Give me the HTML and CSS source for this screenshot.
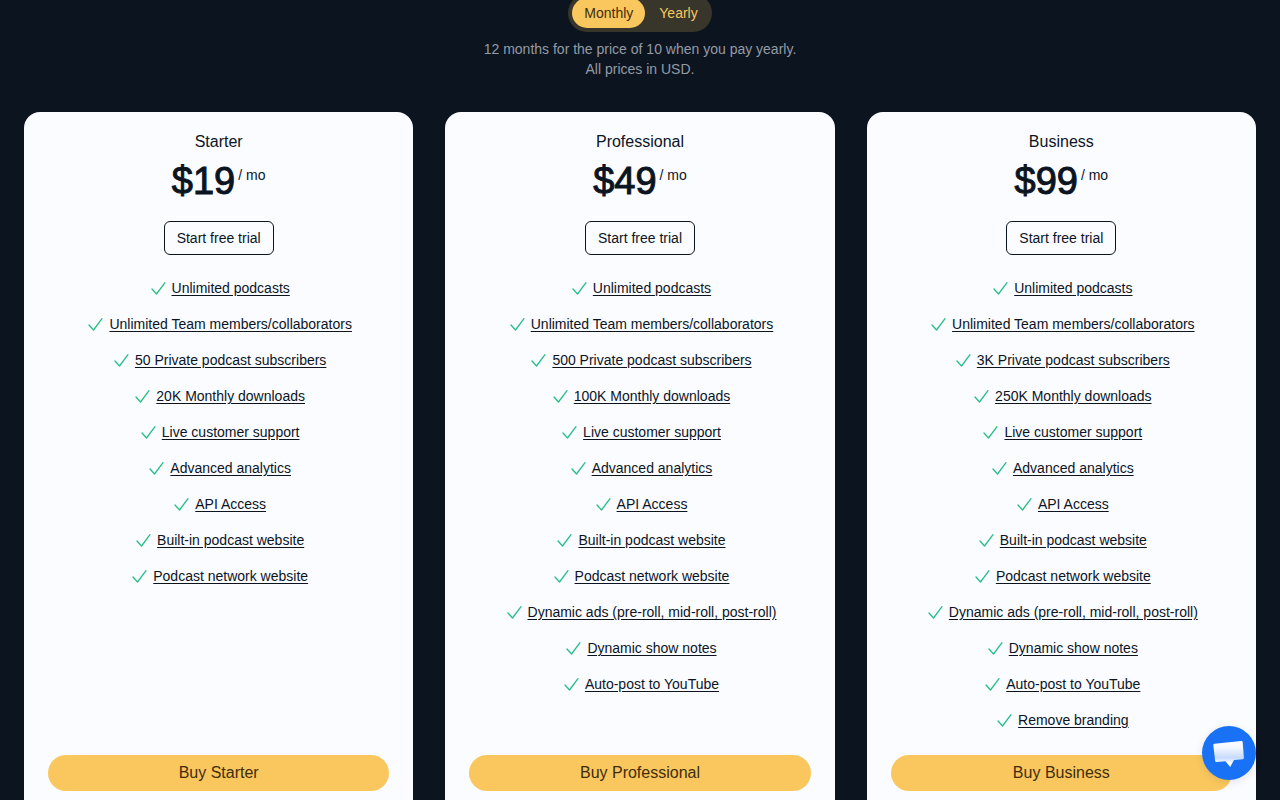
FILE: index.html
```
<!DOCTYPE html>
<html lang="en">
<head>
<meta charset="utf-8">
<meta name="viewport" content="width=device-width, initial-scale=1">
<title>Pricing</title>
<link rel="stylesheet" href="styles.css">
</head>
<body>
<main class="pricing">
  <header class="intro">
    <div class="toggle" role="group" aria-label="Billing period">
      <button type="button" class="toggle-btn active" aria-pressed="true">Monthly</button>
      <button type="button" class="toggle-btn" aria-pressed="false">Yearly</button>
    </div>
    <p class="note">12 months for the price of 10 when you pay yearly.<br>All prices in USD.</p>
  </header>
  <div class="plans" id="plans"></div>
</main>
<button type="button" class="chat" aria-label="Open chat">
  <svg viewBox="0 0 54 54" aria-hidden="true">
    <defs><linearGradient id="bubble" x1="0" y1="0" x2="0" y2="1"><stop offset="0" stop-color="#fff"/><stop offset="0.25" stop-color="#f4f8ff"/><stop offset="0.65" stop-color="#c6daff"/><stop offset="0.85" stop-color="#fff"/></linearGradient></defs>
    <path d="M12.500 17.700 39.200 15c.8-.1 1.400.4 1.500 1.200l1.200 15.500c0 .8-.5 1.400-1.300 1.500L32 34 28.200 41 23.500 35.200 14.600 36c-.8.1-1.400-.4-1.500-1.200L11.300 19.200c-.1-.8.4-1.400 1.200-1.500z" fill="url(#bubble)"/>
  </svg>
</button>
<script src="plans.js"></script>
</body>
</html>
```
FILE: plans.js
```
const shared = ["Live customer support", "Advanced analytics", "API Access", "Built-in podcast website", "Podcast network website"];
const extras = ["Dynamic ads (pre-roll, mid-roll, post-roll)", "Dynamic show notes", "Auto-post to YouTube"];
const plans = [
  { name: "Starter", price: 19, subs: "50", downloads: "20K", more: [] },
  { name: "Professional", price: 49, subs: "500", downloads: "100K", more: extras },
  { name: "Business", price: 99, subs: "3K", downloads: "250K", more: [...extras, "Remove branding"] }
];
const check = '<svg class="check" viewBox="0 0 20 20" aria-hidden="true"><path d="M4 11 8.500 16 17 4.700"/></svg>';

document.getElementById("plans").innerHTML = plans.map(p => {
  const features = ["Unlimited podcasts", "Unlimited Team members/collaborators",
    `${p.subs} Private podcast subscribers`, `${p.downloads} Monthly downloads`, ...shared, ...p.more];
  return `<section class="card">
    <h2 class="name">${p.name}</h2>
    <p class="price"><span class="amount">$${p.price}</span><span class="per">/ mo</span></p>
    <button type="button" class="trial">Start free trial</button>
    <ul class="features">${features.map(f => `<li class="feature">${check}<a href="#">${f}</a></li>`).join("")}</ul>
    <button type="button" class="buy">Buy ${p.name}</button>
  </section>`;
}).join("");
```
FILE: styles.css
```
* { box-sizing: border-box; }
body {
  margin: 0;
  height: 100vh;
  overflow: hidden;
  background: #0c141f;
  color: #0c141f;
  font: 14px/20px "Liberation Sans", Arial, sans-serif;
}
button { font: inherit; color: inherit; cursor: pointer; }
h2, p, ul { margin: 0; padding: 0; }

/* The view starts slightly below the top of the billing switch. */
.pricing { margin-top: -6px; padding: 0 24px 24px; }
.intro { display: flex; flex-direction: column; align-items: center; gap: 7px; text-align: center; }
.toggle { display: flex; padding: 4px; border-radius: 19px; background: #38362b; }
.toggle-btn {
  height: 30px;
  padding: 0 12px;
  border: 0;
  border-radius: 15px;
  background: none;
  color: #fac75e;
}
.toggle-btn.active { background: #fac75e; color: #3f2d0c; }
.toggle-btn:last-child { padding-left: 14px; padding-right: 10px; }
.note { color: #949ba5; }

.plans {
  display: grid;
  grid-template-columns: repeat(3, minmax(0, 1fr));
  gap: 32px;
  margin-top: 33px;
}
.card {
  display: flex;
  flex-direction: column;
  align-items: center;
  padding: 18px 24px 32px;
  border-radius: 16px;
  background: #fafcff;
}
.name { font-size: 16px; font-weight: 400; line-height: 24px; }
.price { display: flex; align-items: flex-start; gap: 3px; margin-top: 7px; }
.amount { font-size: 38px; line-height: 40px; -webkit-text-stroke: 1px currentColor; }
.per { margin-top: 4px; }
.trial {
  height: 34px;
  margin-top: 20px;
  padding: 0 12px;
  border: 1px solid #0c141f;
  border-radius: 6px;
  background: none;
}
.features {
  display: flex;
  flex: 1;
  flex-direction: column;
  align-items: center;
  gap: 16px;
  margin: 23px 0 25px;
  list-style: none;
}
.feature { display: flex; align-items: center; gap: 4px; }
.feature a { color: inherit; text-underline-offset: 2px; }
.check { width: 20px; height: 20px; fill: none; stroke: #27be83; stroke-width: 1.3; stroke-linecap: round; stroke-linejoin: round; }
.buy {
  align-self: stretch;
  height: 36px;
  border: 0;
  border-radius: 18px;
  background: #fac75e;
  color: #3f2d0c;
  font-size: 16px;
}
.chat {
  position: fixed;
  right: 24px;
  bottom: 20px;
  width: 54px;
  height: 54px;
  padding: 0;
  border: 0;
  border-radius: 50%;
  background: #1972f5;
  box-shadow: 0 2px 8px rgb(0 0 0 / 10%);
}
.chat svg { display: block; width: 100%; }
```
